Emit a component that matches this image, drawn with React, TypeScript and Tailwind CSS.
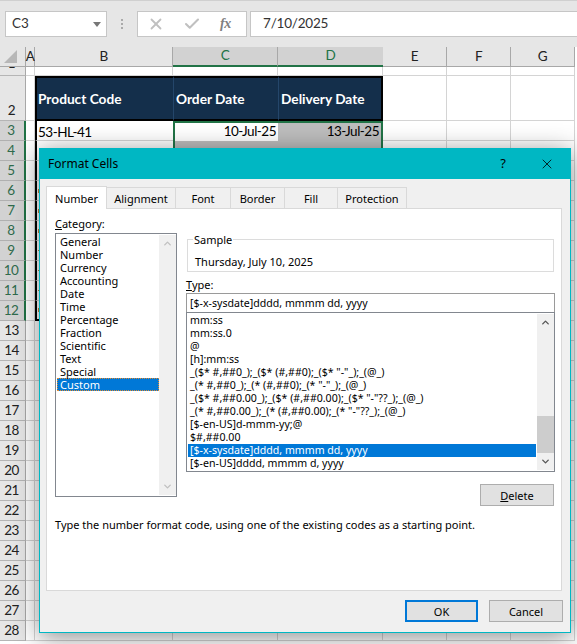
import { X, Check, ChevronUp, ChevronDown } from "lucide-react";

const rows = Array.from({ length: 28 }, (_, i) => i + 1);
const cols = ["E", "F", "G"];
const categories = ["General", "Number", "Currency", "Accounting", "Date", "Time", "Percentage", "Fraction", "Scientific", "Text", "Special", "Custom"];
const types = [
  "mm:ss",
  "mm:ss.0",
  "@",
  "[h]:mm:ss",
  '_($* #,##0_);_($* (#,##0);_($* "-"_);_(@_)',
  '_(* #,##0_);_(* (#,##0);_(* "-"_);_(@_)',
  '_($* #,##0.00_);_($* (#,##0.00);_($* "-"??_);_(@_)',
  '_(* #,##0.00_);_(* (#,##0.00);_(* "-"??_);_(@_)',
  "[$-en-US]d-mmm-yy;@",
  "$#,##0.00",
  "[$-x-sysdate]dddd, mmmm dd, yyyy",
  "[$-en-US]dddd, mmmm d, yyyy",
];
const tabs = [
  ["Alignment", "w-[69px]"],
  ["Font", "w-[55px]"],
  ["Border", "w-[54px]"],
  ["Fill", "w-[53px]"],
  ["Protection", "w-[69px]"],
];
const marks: Record<number, string> = { 6: "h-1", 7: "h-1", 8: "h-1", 9: "h-px", 10: "h-px", 11: "h-px", 12: "h-1" };

function RowHeader({ r }: { r: number }) {
  const selected = r >= 3 && r <= 12;
  return (
    <div
      className={
        "w-[26px] shrink-0 flex justify-center border-b pr-[2px] " +
        (selected
          ? "bg-[#d2d2d2] border-[#b0b0b0] border-r-2 border-r-[#217346] text-[#2f6b4c] items-center "
          : "bg-[#e6e6e6] border-[#b5b5b5] border-r border-r-[#a8a8a8] text-[#222] items-center ") +
        (r === 1 ? "h-[9px] overflow-hidden !items-end pb-[5px]" : r === 2 ? "h-[45px] !items-end pb-[3px]" : "h-5")
      }
    >
      {r}
    </div>
  );
}

function SheetRow({ r }: { r: number }) {
  const h = r === 1 ? "h-[9px]" : r === 2 ? "h-[45px]" : "h-5";
  const grid = "border-b border-r border-[#d4d4d4]";
  const head = "shrink-0 bg-[#142f4b] text-white font-bold text-[13.7px] tracking-normal flex items-center";
  return (
    <div className={"flex " + h}>
      <RowHeader r={r} />
      <div className={"w-[9px] shrink-0 " + grid} />
      {r === 2 ? (
        <>
          <div className={"w-[138px] border-2 border-black border-r-0 pl-px pt-px " + head}>Product Code</div>
          <div className={"w-[105px] border-y-2 border-l border-black border-l-[#24466a] pl-[2px] pt-px " + head}>Order Date</div>
          <div className={"w-[105px] border-y-2 border-l border-r-2 border-black border-l-[#24466a] pl-[2px] pt-px " + head}>Delivery Date</div>
        </>
      ) : r === 1 ? (
        <>
          <div className={"w-[138px] shrink-0 " + grid} />
          <div className={"w-[105px] shrink-0 " + grid} />
          <div className={"w-[105px] shrink-0 " + grid} />
        </>
      ) : r === 3 ? (
        <>
          <div className="w-[138px] shrink-0 border-l-2 border-black border-b border-b-[#d4d4d4] flex items-center pl-px pt-[5px] text-black">53-HL-41</div>
          <div className="w-[105px] shrink-0 border-l-2 border-t-2 border-[#217346] bg-white flex items-center justify-end pr-[2px] text-black">10-Jul-25</div>
          <div className="w-[105px] shrink-0 border-t-2 border-r-2 border-[#217346] bg-[#bdbdbd] flex items-center justify-end pr-[2px] text-black">13-Jul-25</div>
        </>
      ) : r <= 12 ? (
        <>
          <div className={"w-[138px] shrink-0 border-l-2 border-black flex items-center pl-px " + (r === 12 ? "border-b-2 border-b-black" : "border-b border-b-[#d4d4d4]")}>
            {marks[r] ? <span className={"w-0.5 bg-[#c98437] " + marks[r]} /> : null}
          </div>
          <div className="w-[105px] shrink-0 border-l-2 border-[#217346] bg-[#bdbdbd]" />
          <div className="w-[105px] shrink-0 border-r-2 border-[#217346] bg-[#bdbdbd]" />
        </>
      ) : (
        <>
          <div className={"w-[138px] shrink-0 " + grid} />
          <div className={"w-[105px] shrink-0 " + grid} />
          <div className={"w-[105px] shrink-0 " + grid} />
        </>
      )}
      {cols.map((c) => (
        <div key={c} className={"w-16 shrink-0 " + grid} />
      ))}
    </div>
  );
}

function Scrollbar({ thumb }: { thumb?: boolean }) {
  return (
    <div className="w-[17px] shrink-0 bg-[#f0f0f0] flex flex-col items-center justify-between my-px">
      <div className="h-[17px] flex items-center justify-center">
        <ChevronUp size={11} strokeWidth={3} className={thumb ? "text-[#555]" : "text-[#c0c0c0]"} />
      </div>
      {thumb ? <div className="w-full h-[37px] bg-[#cdcdcd] mt-auto" /> : null}
      <div className="h-[17px] flex items-center justify-center">
        <ChevronDown size={11} strokeWidth={3} className={thumb ? "text-[#555]" : "text-[#c0c0c0]"} />
      </div>
    </div>
  );
}

export default function App() {
  return (
    <div className="relative w-[577px] h-[644px] overflow-hidden bg-white font-['Lato',sans-serif] text-[13.5px] tracking-[-0.5px] leading-none select-none">
      <div className="h-[47px] bg-[#e6e6e6] border-t border-[#d0d0d0] flex items-start pt-[10px]">
        <div className="ml-[5px] w-[102px] h-[26px] bg-white border border-[#c6c6c6] flex items-center justify-between pl-[6px] pr-[5px] text-[#333] tracking-normal">
          <span>C3</span>
          <svg width="8" height="5" viewBox="0 0 8 5"><path d="M0 0h8L4 5z" fill="#777" /></svg>
        </div>
        <div className="w-[30px] h-[26px] flex flex-col items-center justify-center gap-[2px]">
          <span className="w-0.5 h-0.5 bg-[#aaa]" />
          <span className="w-0.5 h-0.5 bg-[#aaa]" />
          <span className="w-0.5 h-0.5 bg-[#aaa]" />
        </div>
        <div className="w-[110px] h-[26px] bg-white border border-[#c6c6c6] flex items-center text-[#c0c0c0]">
          <X size={18} strokeWidth={2.4} className="ml-[9px]" />
          <Check size={18} strokeWidth={2.8} className="ml-[18px]" />
          <span className="ml-[19px] font-['Liberation_Serif',serif] italic font-bold text-[14px] text-[#808080]">fx</span>
        </div>
        <div className="ml-[3px] flex-1 h-[26px] bg-white border border-[#c6c6c6] border-r-0 flex items-center pl-3 text-[#333] tracking-[-0.2px]">7/10/2025</div>
      </div>

      <div className="flex h-5 text-[#222]">
        <div className="w-[26px] shrink-0 bg-[#e6e6e6] border-b border-r border-[#a8a8a8] flex items-end justify-center pb-[3px]">
          <svg width="13" height="13" viewBox="0 0 13 13" className="ml-[-4px]"><path d="M13 0v13H0z" fill="#b7b7b7" /></svg>
        </div>
        <div className="w-[9px] shrink-0 bg-[#e6e6e6] border-b border-r border-[#a8a8a8] flex items-center justify-center">A</div>
        <div className="w-[138px] shrink-0 bg-[#e6e6e6] border-b border-r border-[#a8a8a8] flex items-center justify-center">B</div>
        <div className="w-[105px] shrink-0 bg-[#d2d2d2] border-b-2 border-r border-[#217346] border-r-[#a8a8a8] flex items-center justify-center text-[#217346]">C</div>
        <div className="w-[105px] shrink-0 bg-[#d2d2d2] border-b-2 border-[#217346] flex items-center justify-center text-[#217346]">D</div>
        {cols.map((c) => (
          <div key={c} className="w-16 shrink-0 bg-[#e6e6e6] border-b border-r border-[#a8a8a8] flex items-center justify-center">{c}</div>
        ))}
      </div>

      {rows.map((r) => (
        <SheetRow key={r} r={r} />
      ))}

      <div className="absolute left-[39px] top-[148px] w-[532px] h-[485px] bg-[#f0f0f0] border border-[#00b7c3] shadow-[0_4px_24px_rgba(0,0,0,0.45)] flex flex-col font-['Noto_Sans',sans-serif] text-[11px] tracking-normal text-black">
        <div className="h-[31px] -mt-px -mx-px bg-[#00b7c3] shrink-0 flex items-center pl-[9px] pr-[16px] text-[12px]">
          <span className="flex-1">Format Cells</span>
          <span className="mr-[33px] text-[13px]">?</span>
          <X size={16} strokeWidth={1.2} />
        </div>

        <div className="flex pl-[6px] pt-[7px] shrink-0 h-[30px]">
          <div className="w-[61px] h-[23px] bg-white border border-b-0 border-[#d9d9d9] z-10 flex items-center justify-center">Number</div>
          {tabs.map(([t, w]) => (
            <div key={t} className={"h-[22px] mt-px border border-l-0 border-[#d9d9d9] flex items-center justify-center " + w}>{t}</div>
          ))}
        </div>

        <div className="mx-[6px] -mt-px w-[516px] h-[383px] bg-white border border-[#d9d9d9] px-2 pt-[8px] flex flex-col">
          <div className="flex gap-[9px] h-[280px]">
            <div className="w-[122px] shrink-0 flex flex-col">
              <div className="h-[16px] leading-[14px]"><u>C</u>ategory:</div>
              <div className="h-[264px] border border-[#82878f] flex justify-between">
                <div className="flex-1 pt-px pl-px">
                  {categories.map((c) => (
                    <div key={c} className={"h-[13px] leading-[13px] pl-[3px] " + (c === "Custom" ? "bg-[#0078d7] text-white outline-1 outline-dotted outline-[#e08a30] -outline-offset-1" : "")}>{c}</div>
                  ))}
                </div>
                <Scrollbar />
              </div>
            </div>
            <div className="w-[369px] shrink-0 flex flex-col pt-[22px]">
              <div className="relative h-[33px] mx-px border border-[#dcdcdc] flex items-end pb-[4px] pl-[7px]">
                <span className="absolute -top-[6px] left-[5px] bg-white px-px">Sample</span>
                Thursday, July 10, 2025
              </div>
              <div className="h-[21px] flex items-end pb-[3px]"><span><u>T</u>ype:</span></div>
              <div className="h-5 border border-[#9a9a9a] flex items-center pl-[3px] text-[10.6px]">[$-x-sysdate]dddd, mmmm dd, yyyy</div>
              <div className="h-[160px] -mt-px border border-[#82878f] flex text-[10.6px]">
                <div className="flex-1 pt-px pl-px pr-px">
                  {types.map((t) => (
                    <div key={t} className={"h-[13px] leading-[13px] pl-[2px] whitespace-nowrap " + (t.startsWith("[$-x") ? "bg-[#0078d7] text-white" : "")}>{t}</div>
                  ))}
                </div>
                <Scrollbar thumb />
              </div>
            </div>
          </div>
          <div className="flex justify-end mt-[-13px]">
            <div className="w-[74px] h-[22px] mr-[-1px] bg-[#e1e1e1] border border-[#adadad] flex items-center justify-center"><span><u>D</u>elete</span></div>
          </div>
          <div className="mt-[12px] leading-[14px] whitespace-nowrap">Type the number format code, using one of the existing codes as a starting point.</div>
        </div>

        <div className="flex justify-end gap-[11px] pr-[7px] pt-[9px]">
          <div className="w-[73px] h-[22px] bg-[#e1e1e1] border-2 border-[#0078d7] flex items-center justify-center">OK</div>
          <div className="w-[74px] h-[22px] bg-[#e1e1e1] border border-[#adadad] flex items-center justify-center">Cancel</div>
        </div>
      </div>
    </div>
  );
}
